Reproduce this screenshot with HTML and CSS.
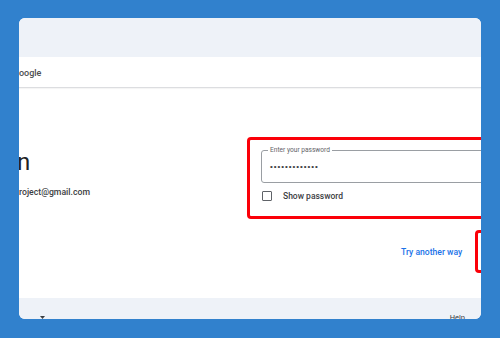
FILE: index.html
```html
<!DOCTYPE html>
<html lang="en">
<head>
<meta charset="utf-8">
<title>Enter your password</title>
<link rel="stylesheet" href="styles.css">
</head>
<body>
<div class="card">
  <div class="topband"></div>
  <div class="header"><span class="brand">oogle</span></div>
  <div class="main">
    <div class="left">
      <div class="title">n</div>
      <div class="email">roject@gmail.com</div>
    </div>
    <div class="right">
      <div class="highlight">
        <div class="field">
          <span class="label">Enter your password</span>
          <span class="dots">•••••••••••••</span>
        </div>
        <div class="check-row">
          <span class="checkbox"></span>
          <span class="check-label">Show password</span>
        </div>
      </div>
      <div class="actions">
        <span class="link">Try another way</span>
        <span class="next-box"></span>
      </div>
    </div>
  </div>
  <div class="footer">
    <svg class="caret" width="5" height="3" viewBox="0 0 5 3"><path d="M0 0H5L2.5 3Z" fill="#3c4043"/></svg>
    <span class="help">Help</span>
  </div>
</div>
</body>
</html>
```
FILE: styles.css
```css
html, body {
  margin: 0;
  padding: 0;
}
body {
  width: 500px;
  height: 338px;
  background: #3181cd;
  padding: 18px 19px 19px 19px;
  box-sizing: border-box;
  font-family: Roboto, "Liberation Sans", Arial, sans-serif;
  overflow: hidden;
}
.card {
  height: 301px;
  background: #fff;
  border-radius: 6px;
  overflow: hidden;
  display: flex;
  flex-direction: column;
}
.topband {
  height: 39px;
  background: #eef2f8;
  flex: none;
}
.header {
  height: 30px;
  flex: none;
  border-bottom: 1px solid #dcdde0;
  box-shadow: 0 1px 1px rgba(0,0,0,0.04);
  display: flex;
  align-items: center;
}
.brand {
  font-size: 9px;
  font-weight: 500;
  color: #4a4d51;
  margin-top: 2px;
}
.main {
  height: 210px;
  flex: none;
  display: flex;
}
.left {
  width: 228px;
  flex: none;
  padding-top: 60px;
}
.title {
  font-size: 24px;
  line-height: 28px;
  color: #202124;
  margin-left: -2px;
}
.email {
  margin-top: 10px;
  font-size: 8.7px;
  line-height: 12px;
  font-weight: 500;
  color: #3c4043;
}
.right {
  width: 300px;
  flex: none;
  padding-top: 49px;
}
.highlight {
  height: 82px;
  box-sizing: border-box;
  border: 3px solid #fb0008;
  border-radius: 4px;
  padding: 10px 0 0 11px;
}
.field {
  position: relative;
  height: 33px;
  box-sizing: border-box;
  border: 1px solid #9a9ea3;
  border-radius: 3px;
  display: flex;
  align-items: center;
  padding-left: 8px;
}
.label {
  position: absolute;
  top: -5px;
  left: 6px;
  padding: 0 2px;
  background: #fff;
  font-size: 6.6px;
  line-height: 8px;
  color: #5f6368;
}
.dots {
  font-family: "Liberation Sans", Arial, sans-serif;
  font-size: 8px;
  letter-spacing: 0.95px;
  color: #3c4043;
  line-height: 12px;
}
.check-row {
  display: flex;
  align-items: center;
  margin-top: 8px;
}
.checkbox {
  width: 10px;
  height: 10px;
  box-sizing: border-box;
  border: 1.5px solid #5f6368;
  border-radius: 1px;
  margin-left: 1px;
  flex: none;
}
.check-label {
  margin-left: 11px;
  font-size: 8.5px;
  font-weight: 500;
  color: #3c4043;
  line-height: 10px;
}
.actions {
  margin-top: 11px;
  display: flex;
  align-items: center;
  padding-left: 154px;
  gap: 13px;
}
.link {
  flex: none;
  white-space: nowrap;
  font-size: 8.6px;
  font-weight: 500;
  color: #1a73e8;
  line-height: 10px;
}
.next-box {
  width: 60px;
  height: 43px;
  box-sizing: border-box;
  border: 3px solid #fb0008;
  border-radius: 4px;
  flex: none;
}
.footer {
  flex: 1;
  background: #eef2f8;
  display: flex;
  justify-content: space-between;
  align-items: flex-start;
  padding: 16px 16px 0 21px;
}
.caret {
  display: block;
  margin-top: 2px;
}
.help {
  font-size: 7.5px;
  line-height: 9px;
  color: #3c4043;
  margin-top: -1px;
}
```
